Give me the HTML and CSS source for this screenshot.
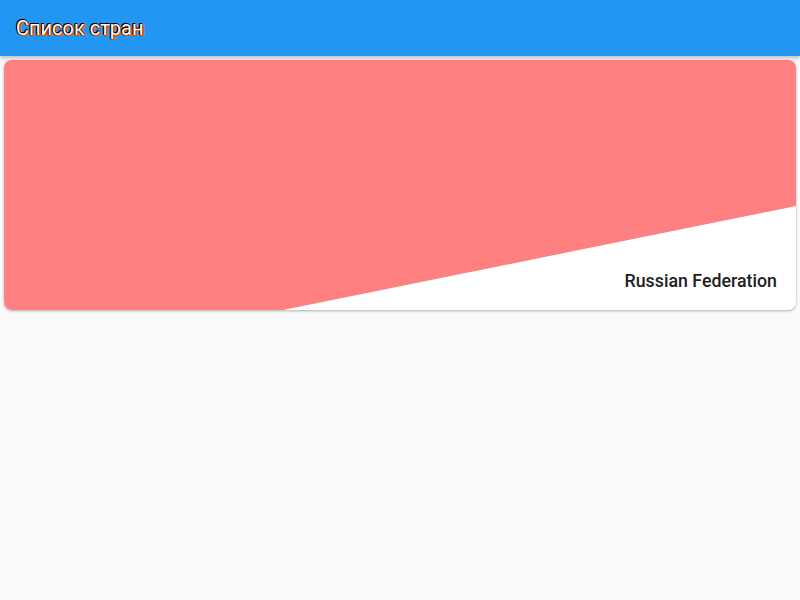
FILE: index.html
```html
<!DOCTYPE html>
<html>
<head>
<meta charset="utf-8">
<link rel="stylesheet" href="styles.css">
</head>
<body>
<header class="appbar"><h1 class="title">Список стран</h1></header>
<main class="list">
  <div class="card">
    <svg class="bg" viewBox="0 0 792 250" preserveAspectRatio="none">
      <polygon points="0,0 792,0 792,146 279,250 0,250" fill="#ff8080"/>
    </svg>
    <div class="name">Russian Federation</div>
  </div>
</main>
</body>
</html>
```
FILE: styles.css
```css
html, body { margin: 0; padding: 0; }
body { background: #fafafa; font-family: Roboto, "Noto Sans", sans-serif; width: 800px; height: 600px; overflow: hidden; }
.appbar {
  height: 56px; background: #2196f3; display: flex; align-items: center; padding: 0 16px;
  box-shadow: 0 2px 4px rgba(0,0,0,0.25); position: relative; z-index: 1;
}
.title {
  margin: 0; font-size: 20px; font-weight: 400; color: #fff;
  text-shadow: -1px 0 0 #000, 0 -1px 0 #000, -1px -1px 0 #000, 1px 1px 0 #e65100, 1px 0 0 #b84000, 0 1px 0 #b84000, 2px 1px 0 #e65100;
}
.list { padding: 4px; }
.card {
  position: relative; height: 250px; background: #fff; border-radius: 8px; overflow: hidden;
  box-shadow: 0 1px 3px rgba(0,0,0,0.3);
}
.bg { position: absolute; left: 0; top: 0; width: 100%; height: 100%; display: block; }
.name {
  position: absolute; right: 19px; bottom: 19px; font-size: 17.8px; font-weight: 500; color: #212121;
}
```
